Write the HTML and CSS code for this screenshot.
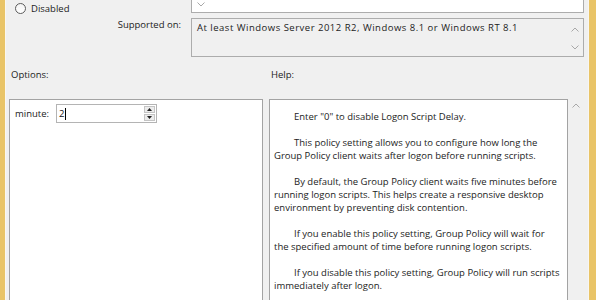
FILE: index.html
```html
<!DOCTYPE html>
<html>
<head>
<meta charset="utf-8">
<link rel="stylesheet" href="styles.css">
</head>
<body>
<div class="screen">
  <div class="edge edge-left"></div>
  <div class="dialog">
    <div class="row row-state">
      <label class="radio"><span class="radio-dot"></span><span>Disabled</span></label>
      <div class="field field-comment">
        <div class="scroll-arrows">
          <svg class="chev" width="8" height="5" viewBox="0 0 8 5"><polyline points="0.5,0.5 4,4 7.5,0.5"/></svg>
        </div>
      </div>
    </div>
    <div class="row row-supported">
      <div class="row-label">Supported on:</div>
      <div class="field field-supported">
        <span class="field-text">At least Windows Server 2012 R2, Windows 8.1 or Windows RT 8.1</span>
        <div class="scroll-arrows">
          <svg class="chev" width="8" height="5" viewBox="0 0 8 5"><polyline points="0.5,4.5 4,1 7.5,4.5"/></svg>
          <svg class="chev" width="8" height="5" viewBox="0 0 8 5"><polyline points="0.5,0.5 4,4 7.5,0.5"/></svg>
        </div>
      </div>
    </div>
    <div class="section-labels">
      <span class="opt-label">Options:</span>
      <span class="help-label">Help:</span>
    </div>
    <div class="panels">
      <div class="panel panel-options">
        <div class="option-row">
          <span class="option-name">minute:</span>
          <div class="spin">
            <span class="spin-value">2<span class="caret"></span></span>
            <div class="spin-buttons">
              <span class="spin-btn"><svg width="5" height="3" viewBox="0 0 5 3"><polygon points="0,3 2.5,0 5,3"/></svg></span>
              <span class="spin-btn"><svg width="5" height="3" viewBox="0 0 5 3"><polygon points="0,0 2.5,3 5,0"/></svg></span>
            </div>
          </div>
        </div>
      </div>
      <div class="panel panel-help">
        <p>Enter "0" to disable Logon Script Delay.</p>
        <p>This policy setting allows you to configure how long the<br>Group Policy client waits after logon before running scripts.</p>
        <p>By default, the Group Policy client waits five minutes before<br>running logon scripts. This helps create a responsive desktop<br>environment by preventing disk contention.</p>
        <p>If you enable this policy setting, Group Policy will wait for<br>the specified amount of time before running logon scripts.</p>
        <p>If you disable this policy setting, Group Policy will run scripts<br>immediately after logon.</p>
      </div>
      <div class="help-scroll">
        <svg class="chev" width="8" height="5" viewBox="0 0 8 5"><polyline points="0.5,4.5 4,1 7.5,4.5"/></svg>
      </div>
    </div>
  </div>
  <div class="edge edge-right"></div>
</div>
</body>
</html>
```

FILE: styles.css
```css
html, body {
  margin: 0;
  padding: 0;
}

body {
  background: #f0f0f0;
  font-family: "Open Sans", "Noto Sans", sans-serif;
  font-size: 9.5px;
  line-height: 13px;
  color: #1c1c1c;
}

.screen {
  display: flex;
  width: 596px;
  height: 300px;
  overflow: hidden;
}

.edge {
  flex: none;
  background: #e9c467;
}

.edge-left {
  width: 5px;
  border-right: 1px solid #fbf7ee;
}

.edge-right {
  width: 7px;
  border-left: 1px solid #f8f6f2;
}

.dialog {
  flex: 1;
  min-width: 0;
}

.row {
  display: grid;
  grid-template-columns: 185px 393px;
}

.row-state {
  height: 13px;
}

.radio {
  display: flex;
  align-items: center;
  gap: 5px;
  padding-left: 9px;
  height: 13px;
  padding-top: 2px;
  color: #222;
}

.radio-dot {
  width: 9px;
  height: 9px;
  border: 1px solid #5c5c5c;
  border-radius: 50%;
  background: linear-gradient(#f4f4f4, #ffffff);
}

.field {
  box-sizing: border-box;
  border: 1px solid #acacac;
  display: flex;
  justify-content: space-between;
}

.field-comment {
  height: 33px;
  margin-top: -20px;
  background: #ffffff;
  align-items: flex-end;
}

.field-comment .scroll-arrows {
  padding-bottom: 5px;
}

.row-supported {
  margin-top: 5px;
}

.row-label {
  text-align: right;
  padding-right: 10px;
  color: #222;
}

.field-supported {
  height: 39px;
  background: #f0f0f0;
}

.field-text {
  padding: 2px 0 0 5px;
  white-space: nowrap;
  letter-spacing: 0.5px;
}

.scroll-arrows {
  width: 17px;
  display: flex;
  flex-direction: column;
  justify-content: space-between;
  align-items: center;
  padding: 8px 0 6px;
  box-sizing: border-box;
}

.chev {
  display: block;
  fill: none;
  stroke: #a8a8a8;
  stroke-width: 1;
}

.section-labels {
  display: flex;
  margin-top: 11px;
  padding-left: 5px;
  color: #222;
}

.opt-label {
  width: 260px;
}

.panels {
  display: flex;
  margin-top: 18px;
  margin-left: 3px;
  gap: 6px;
  height: 210px;
}

.panel {
  box-sizing: border-box;
  border: 1px solid #a3a3a3;
  background: #ffffff;
}

.panel-options {
  width: 254px;
  padding: 4px 0 0 5px;
}

.option-row {
  display: flex;
  align-items: center;
}

.option-name {
  width: 41px;
  color: #222;
}

.spin {
  box-sizing: border-box;
  width: 101px;
  height: 19px;
  border: 1px solid #b4b4b4;
  display: flex;
  justify-content: space-between;
  align-items: center;
  padding: 1px 1px 1px 2px;
}

.spin-value {
  display: flex;
  align-items: center;
  color: #111;
}

.caret {
  width: 1px;
  height: 12px;
  background: #000;
  margin-left: 1px;
}

.spin-buttons {
  display: flex;
  flex-direction: column;
  gap: 1px;
  align-self: stretch;
}

.spin-btn {
  flex: 1;
  width: 11px;
  box-sizing: border-box;
  border: 1px solid #c4c4c4;
  background: #ececec;
  display: flex;
  align-items: center;
  justify-content: center;
}

.spin-btn svg {
  display: block;
  fill: #222;
}

.panel-help {
  width: 299px;
  padding: 10px 0 0 4px;
  white-space: nowrap;
}

.panel-help p {
  margin: 0 0 13px;
  text-indent: 20px;
}

.help-scroll {
  width: 15px;
  margin-left: -6px;
  display: flex;
  justify-content: center;
  padding-top: 4px;
}
```
